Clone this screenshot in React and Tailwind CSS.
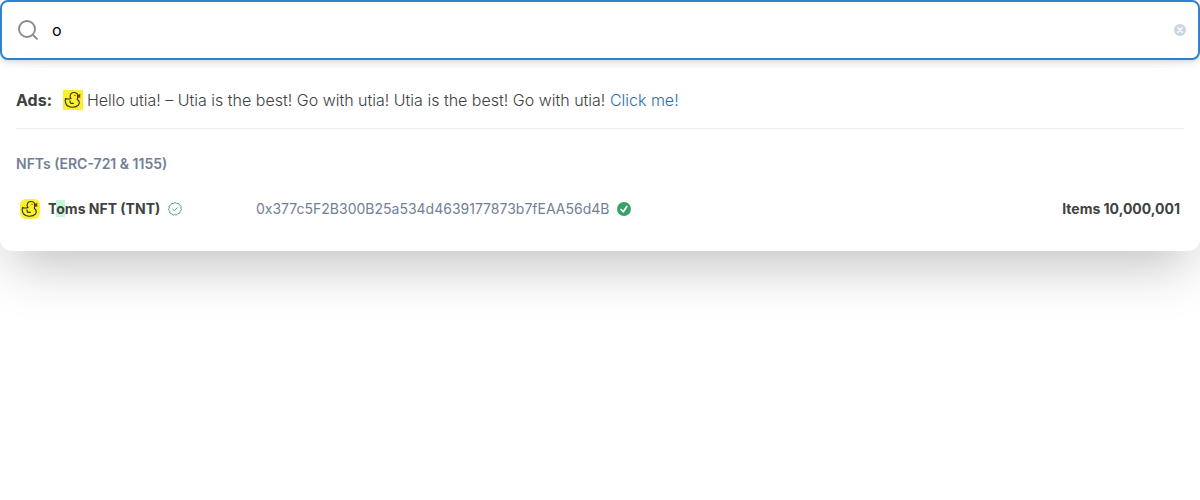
import React from 'react';

function Duck({ className }) {
  return (
    <svg viewBox="0 0 20 20" className={className} aria-hidden="true">
      <rect width="20" height="20" fill="#fbf02e" />
      <g fill="none" stroke="#37320f" strokeWidth="1.100" strokeLinecap="round" strokeLinejoin="round">
        <path d="M2.500 8.500C4 9.300 5.800 9.200 8 8.500C7.300 7.800 7 6.900 7.100 6C7.300 4 8.900 2.500 11 2.500C13.200 2.500 14.700 3.900 14.900 5.600C15 7.200 14.400 8.200 14.200 9.200C16.300 10.800 16.800 13.200 15.300 15.200C13.900 16.900 11.500 17.300 9 17.200C5.600 17.100 3 15.300 2.400 12.200C2.100 10.800 2.200 9.500 2.500 8.500Z" />
        <path d="M7 10.800C6.700 12.700 7.800 13.800 10.500 13.300" />
      </g>
      <circle cx="12" cy="5.300" r="0.600" fill="#37320f" />
      <path d="M14 5.400L17.300 4.300L16.800 6.100L17.200 7.500L14.500 7.200Z" fill="#8d3213" stroke="#4b2410" strokeWidth="0.400" />
    </svg>
  );
}

function SearchIcon() {
  return (
    <svg viewBox="0 0 20 20" className="size-5 shrink-0" fill="none" stroke="#8b8b8c" strokeWidth="1.900" aria-hidden="true">
      <circle cx="9" cy="9" r="8" />
      <path d="M14.700 14.700L19.600 19.400" />
    </svg>
  );
}

function VerifiedBadge() {
  return (
    <svg viewBox="0 0 14 14" className="size-3.5 shrink-0" fill="none" stroke="#38a169" strokeLinecap="round" strokeLinejoin="round" role="img" aria-label="Verified token">
      <path strokeWidth="0.900" d="M7 .5L8.700 1.500L10.700 1.300L11.500 3.100L13.200 4.200L12.800 6.100L13.500 7.900L12.100 9.300L11.700 11.200L9.800 11.600L8.500 13.100L6.700 12.600L4.900 13.200L3.700 11.600L1.800 11.100L1.600 9.200L.5 7.600L1.200 5.900L1 4L2.700 3.100L3.600 1.400L5.500 1.500Z" />
      <path strokeWidth="0.900" d="M4.800 7.200L6.300 8.600L9.200 5.700" />
    </svg>
  );
}

function CheckBadge() {
  return (
    <svg viewBox="0 0 14 14" className="size-3.5 shrink-0" fill="none" role="img" aria-label="Verified contract">
      <circle cx="7" cy="7" r="7" fill="#38a169" />
      <path d="M4 7.500L6.300 9.800L9.800 4.500" stroke="white" strokeWidth="1.700" strokeLinecap="round" strokeLinejoin="round" />
    </svg>
  );
}

function SearchBar() {
  return (
    <form role="search" onSubmit={(e) => e.preventDefault()}>
      <div className="flex h-15 items-center gap-3.5 rounded-lg border-2 border-[#3182ce] bg-white pr-3 pl-4 shadow-[0_4px_6px_-1px_rgba(0,0,0,0.1),0_2px_4px_-1px_rgba(0,0,0,0.06)]">
        <SearchIcon />
        <input
          type="text"
          aria-label="Search"
          defaultValue="o"
          className="min-w-0 flex-1 bg-transparent text-base text-black outline-none"
        />
        <button type="reset" aria-label="Clear search" className="shrink-0">
          <svg viewBox="0 0 12 12" className="size-3" fill="none" aria-hidden="true">
            <circle cx="6" cy="6" r="6" fill="#cbd5e0" />
            <path d="M3.900 3.900l4.200 4.200M8.100 3.900L3.900 8.100" stroke="white" strokeWidth="1.500" strokeLinecap="round" />
          </svg>
        </button>
      </div>
    </form>
  );
}

export default function App() {
  return (
    <main className="min-h-screen bg-white font-[Inter,sans-serif] text-[#404141]">
      <SearchBar />
      <section className="mt-2 rounded-xl bg-white px-4 py-5 shadow-[0_25px_50px_-12px_rgba(0,0,0,0.25)]">
        <div className="flex items-center border-b border-[#ececec] pb-4 text-base">
          <span className="mr-[11px] font-bold">Ads:</span>
          <Duck className="mr-1 size-5 shrink-0" />
          <p className="font-light">
            Hello utia! – Utia is the best! Go with utia! Utia is the best! Go with utia!{' '}
            <a href="#ad" className="text-[#2b6cb0]">Click me!</a>
          </p>
        </div>
        <h2 className="mt-6 mb-3 text-sm leading-[22px] font-semibold text-[#718096]">NFTs (ERC-721 &amp; 1155)</h2>
        <a href="#token" className="flex h-11 items-center px-1 text-sm">
          <span className="flex w-59 shrink-0 items-center gap-2">
            <Duck className="size-5 shrink-0 rounded-md" />
            <span className="font-bold">
              T<mark className="bg-[#c6f6d5] text-inherit">o</mark>ms NFT (TNT)
            </span>
            <VerifiedBadge />
          </span>
          <span className="flex min-w-0 flex-1 items-center gap-2 text-[#718096]">
            <span className="truncate">0x377c5F2B300B25a534d4639177873b7fEAA56d4B</span>
            <CheckBadge />
          </span>
          <span className="shrink-0 font-bold">Items 10,000,001</span>
        </a>
      </section>
    </main>
  );
}
